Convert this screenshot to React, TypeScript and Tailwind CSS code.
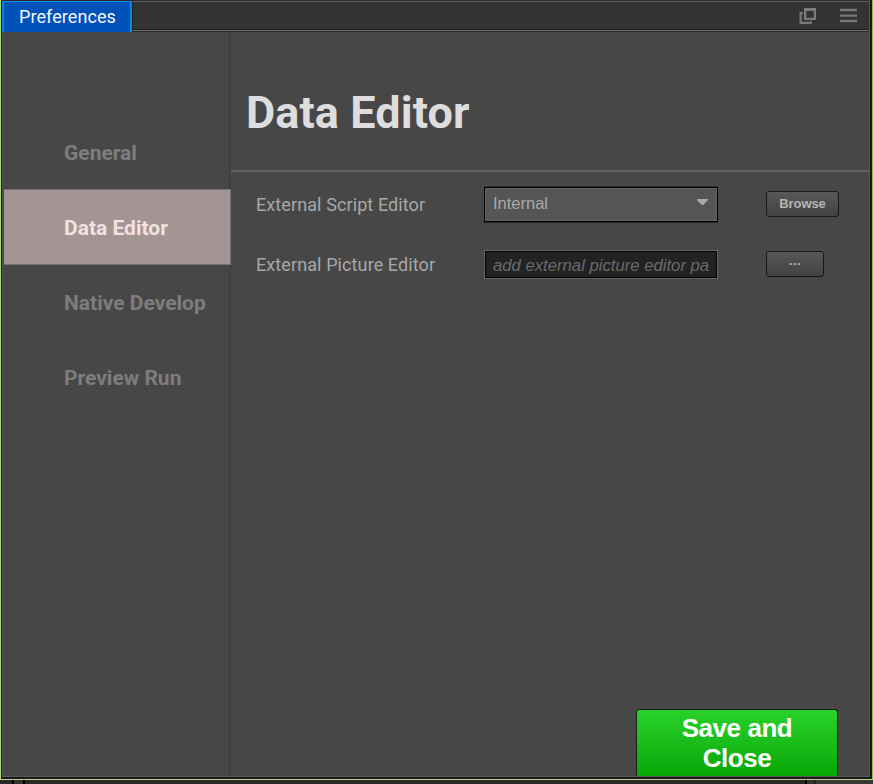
import React from "react";

const sections = ["General", "Data Editor", "Native Develop", "Preview Run"];

function TabBar() {
  return (
    <header className="flex h-[32px] shrink-0 bg-[#292929] pt-px">
      <div className="h-[31px] w-[130px] shrink-0 border-x-2 border-t border-x-[#0786e5] border-t-[#0b95f5] bg-[#0052b8] pl-[15px] text-[18px] leading-[30px] tracking-[0.08px] text-[#f4f6ff]">
        Preferences
      </div>
      <div className="flex h-[30px] flex-1 justify-end border-t border-b border-l border-t-[#606060] border-b-[#6b6b6b] border-l-[#252525] bg-[#333] shadow-[inset_0_-1px_#202020]">
        <svg className="mt-[5px] mr-[22px]" width="18" height="18" viewBox="0 0 18 18">
          <path fill="#7b7b7b" fillRule="evenodd" d="M5 1H17v12H5zm2.3 3v6.8h7.5V4z" />
          <path fill="#777" d="M0.5 5H4v2.3H2.7v7.5H11V14h2v3H.5z" />
        </svg>
        <svg className="mt-[5px] mr-[12px]" width="18" height="18" viewBox="0 0 18 18" stroke="#777" strokeWidth="2.3">
          <path d="M1 3h17M1 8.7h17M1 14h17" />
        </svg>
      </div>
    </header>
  );
}

function Sidebar() {
  return (
    <nav className="w-[227px] shrink-0 border-r-2 border-[#404040] pt-[83px] text-[21px] font-bold">
      {sections.map((name) => (
        <div
          key={name}
          className={
            name === "Data Editor"
              ? "-mt-px -mr-[2px] h-[76px] border-y border-r border-[#777070] bg-[#a39593] pl-[60px] leading-[76px] text-[#f1e2e0]"
              : "h-[75px] pl-[60px] leading-[77px] text-[#7d7d7d]"
          }
        >
          {name}
        </div>
      ))}
    </nav>
  );
}

function Settings() {
  return (
    <main className="flex min-w-0 flex-1 flex-col">
      <h1 className="h-[140px] shrink-0 border-b-2 border-[#606060] pt-[53px] pl-[15px] text-[45px] leading-[56px] font-bold tracking-[0.1px] text-[#ddd]">
        Data Editor
      </h1>
      <div className="mt-[14px] flex h-[37px] shrink-0 items-center pl-[25px]">
        <label className="w-[228px] text-[18px] tracking-[0.1px] text-[#a7a7a7]">External Script Editor</label>
        <div className="flex h-[35px] w-[234px] justify-between border border-black bg-[#555] pr-[9px] pl-2 font-['Liberation_Sans',Arial,sans-serif] text-[16.5px] leading-[31px] text-[#aaa] shadow-[inset_0_0_0_1px_#646464,0_1px_#2a2a2a,0_-1px_#303030]">
          Internal
          <svg className="mt-[11px]" width="11" height="7" viewBox="0 0 11 7" fill="#aaa">
            <path d="M1 0h9q1 0 1 1L6.5 5.7q-1 1-2 0L0 1q0-1 1-1z" />
          </svg>
        </div>
        <button className="mb-px ml-[48px] h-[26px] w-[73px] rounded-[3px] border border-[#171717] bg-linear-to-b from-[#585858] to-[#424242] font-['Liberation_Sans',Arial,sans-serif] text-[13px] font-bold tracking-[-0.1px] text-[#b6b6b6]">
          Browse
        </button>
      </div>
      <div className="mt-[26px] flex h-[30px] shrink-0 pl-[25px]">
        <label className="w-[228px] text-[18px] leading-[32px] tracking-[0.1px] text-[#a7a7a7]">External Picture Editor</label>
        <div className="mt-px h-[29px] w-[234px] border border-[#666] bg-[#222] px-2 font-['Liberation_Sans',Arial,sans-serif] text-[16.7px] leading-[29px] italic text-[#6b6b6b] shadow-[inset_0_0_0_1px_#000]">
          <div className="whitespace-nowrap">add external picture editor pa</div>
        </div>
        <button className="mt-[2px] ml-[48px] flex h-[26px] w-[58px] items-center justify-center rounded-[3px] border border-[#171717] bg-linear-to-b from-[#585858] to-[#424242] font-['Liberation_Sans',Arial,sans-serif] text-[13px] leading-[23px] font-bold tracking-[0.4px] text-[#b6b6b6]">
          <span className="-mt-[8px]">...</span>
        </button>
      </div>
      <button className="mt-auto mr-[31px] h-[67px] w-[202px] self-end rounded-t-[3px] border border-b-0 border-[#172017] bg-linear-to-b from-[#29d229] to-[#04a704] px-[40px] font-['Liberation_Sans',Arial,sans-serif] text-[26px] leading-[30px] font-bold tracking-[-0.45px] text-white">
        Save and Close
      </button>
    </main>
  );
}

export default function App() {
  return (
    <div className="flex h-[784px] w-[873px] flex-col overflow-hidden bg-[#292727] font-[Roboto,sans-serif]">
      <div className="flex h-[780px] shrink-0 border-r border-b border-l border-r-[#9ab846] border-b-[#b8d68a] border-l-[#b8de7c]">
        <div className="flex min-w-0 flex-1 flex-col border-r-2 border-b-2 border-l border-[#191919] bg-[#474747]">
          <div className="flex min-h-0 flex-1 flex-col border-r border-b border-r-[#555] border-b-[#595959]">
            <TabBar />
            <div className="flex min-h-0 flex-1 border-l border-[#515662] pl-px">
              <Sidebar />
              <Settings />
            </div>
          </div>
        </div>
      </div>
      <div className="flex h-[4px] justify-between pl-[12px]">
        <div className="w-[13px] border-x-2 border-black bg-[#333]" />
        <div className="flex w-[68px] border-l-2 border-black bg-[#3a3838]">
          <div className="w-[9px] border-r-2 border-[#222] bg-[#333]" />
        </div>
      </div>
    </div>
  );
}
